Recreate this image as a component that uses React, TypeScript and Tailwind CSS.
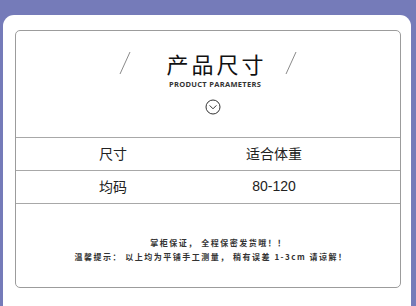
import React from 'react';

const Slash: React.FC = () => (
  <svg width="12" height="24" viewBox="0 0 12 24" className="shrink-0">
    <line x1="11" y1="1" x2="1" y2="23" stroke="#8a8a8a" strokeWidth="1" />
  </svg>
);

const rows = [
  { size: '尺寸', weight: '适合体重' },
  { size: '均码', weight: '80-120' },
];

const App: React.FC = () => {
  return (
    <div
      className="w-[416px] h-[306px] overflow-hidden bg-[#757bb9] pt-[15px] pl-[3px] pr-[5px]"
      style={{ fontFamily: '"Noto Sans CJK SC", "Noto Sans", sans-serif' }}
    >
      <div className="bg-white rounded-t-[11px] h-[300px] pt-[15px] pl-[12px] pr-[10px]">
        <div className="w-[386px] h-[258px] border border-[#9c9c9c] rounded-[5px] flex flex-col">
          {/* header */}
          <div className="h-[106px] flex flex-col items-center">
            <div className="flex items-center mt-[17px] h-[30px]">
              <Slash />
              <span className="ml-[35px] text-[22px] leading-[30px] tracking-[3px] text-[#111] font-normal">
                产品尺寸
              </span>
              <span className="ml-[18px]">
                <Slash />
              </span>
            </div>
            <div
              className="ml-[14px] mt-[1px] text-[7.5px] leading-[10px] font-bold tracking-[0.3px] text-[#333]"
              style={{ fontFamily: '"Open Sans", "Liberation Sans", sans-serif' }}
            >
              PRODUCT PARAMETERS
            </div>
            <svg width="16" height="16" viewBox="0 0 16 16" className="ml-[10px] mt-[10px]">
              <circle cx="8" cy="8" r="7" fill="none" stroke="#333" strokeWidth="1" />
              <path d="M4.6 6.4 L8 9.8 L11.4 6.4" fill="none" stroke="#333" strokeWidth="1" />
            </svg>
          </div>

          {/* table */}
          <div className="border-t border-[#a8a8a8]">
            {rows.map((row, i) => (
              <div
                key={i}
                className="flex h-[33px] items-center border-b border-[#a8a8a8] pb-[2px] text-[14px] text-[#222]"
              >
                <div className="w-[194px] text-center">{row.size}</div>
                <div
                  className="w-[128px] text-center"
                  style={i === 1 ? { fontFamily: '"Liberation Sans", Arial, sans-serif' } : undefined}
                >
                  {row.weight}
                </div>
              </div>
            ))}
          </div>

          {/* notes */}
          <div className="mt-[32px] flex flex-col items-center text-[8px] leading-[14px] font-bold tracking-[1.5px] text-[#333]">
            <div className="ml-[21px]">掌柜保证， 全程保密发货哦！！</div>
            <div className="ml-[6px]">温馨提示： 以上均为平铺手工测量， 稍有误差 1-3cm 请谅解！</div>
          </div>
        </div>
      </div>
    </div>
  );
};

export default App;
